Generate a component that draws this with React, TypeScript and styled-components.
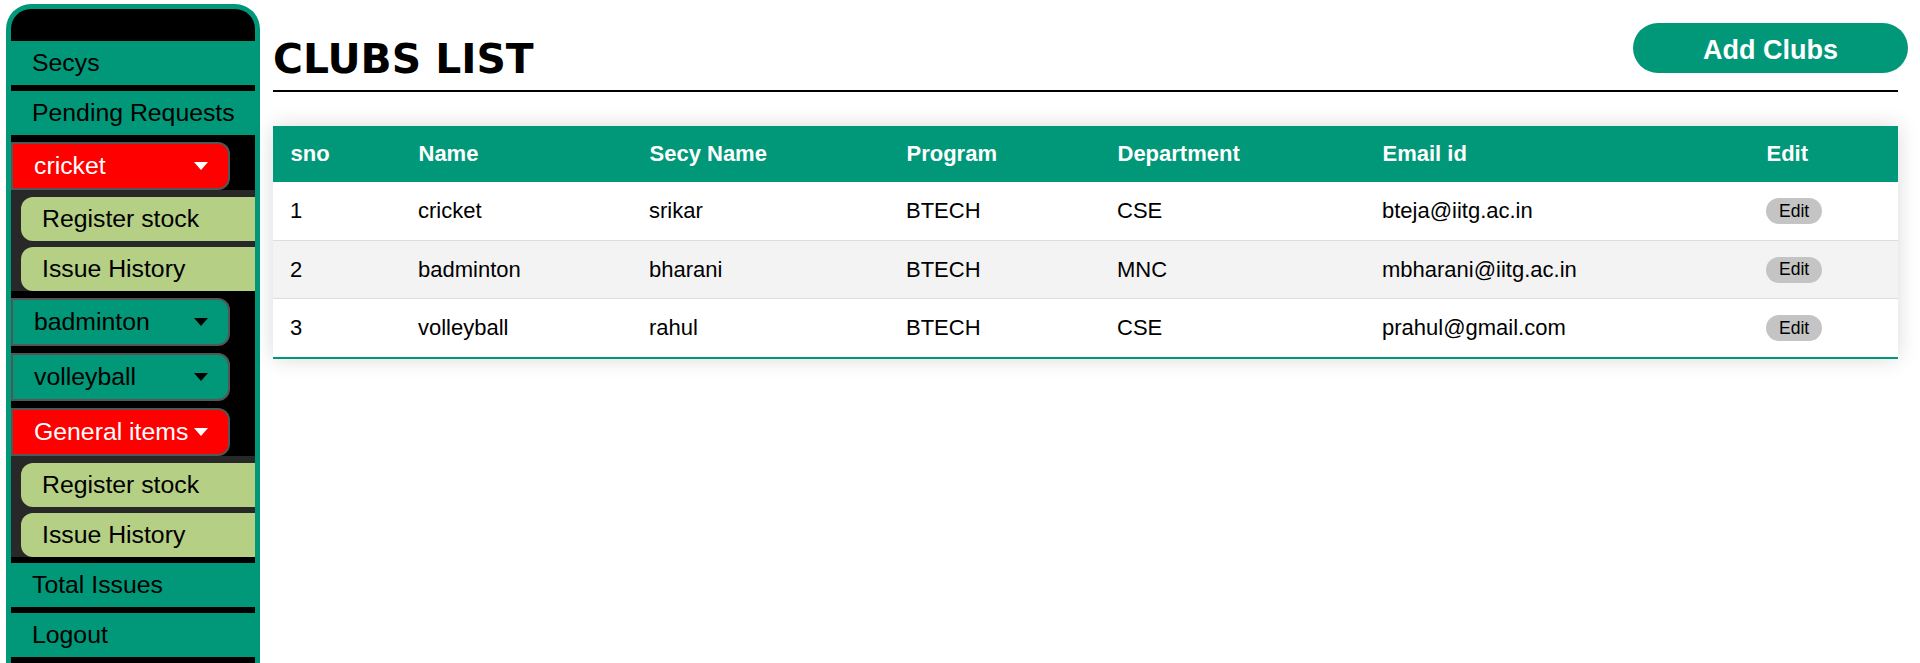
import React from "react";
import styled, { createGlobalStyle } from "styled-components";

const GREEN = "#009879";

const Global = createGlobalStyle`
  html, body { margin: 0; padding: 0; overflow: hidden; background: #fff; }
  body { font-family: "Liberation Sans", Arial, sans-serif; }
`;

const Page = styled.div`
  display: flex;
  align-items: flex-start;
  height: 663px;
  overflow: hidden;
`;

const Sidebar = styled.nav`
  flex: 0 0 auto;
  width: 244px;
  margin: 4px 0 0 6px;
  border: 5px solid ${GREEN};
  border-bottom: none;
  border-radius: 25px 25px 0 0;
  background: #000;
  display: flex;
  flex-direction: column;
  gap: 6px;
  padding-bottom: 60px;
  overflow: hidden;
`;

const SideTop = styled.div`
  height: 26px;
`;

const NavItem = styled.a`
  display: flex;
  align-items: center;
  height: 44px;
  padding-left: 21px;
  background: ${GREEN};
  color: #000;
  font-size: 24.8px;
  text-decoration: none;
`;

const Group = styled.div`
  margin-top: 1px;
  display: flex;
  flex-direction: column;
`;

const DropButton = styled.button<{ $active?: boolean }>`
  box-sizing: border-box;
  width: 219px;
  height: 48px;
  display: flex;
  align-items: center;
  justify-content: space-between;
  padding: 0 20px 0 21px;
  border: 2px solid #555;
  border-radius: 0 12px 12px 0;
  background: ${(p) => (p.$active ? "#ff0000" : GREEN)};
  color: ${(p) => (p.$active ? "#fff" : "#000")};
  font-family: "Liberation Sans", Arial, sans-serif;
  font-size: 24.8px;
  white-space: nowrap;
  cursor: pointer;
`;

const Caret = styled.span`
  flex: 0 0 auto;
  width: 0;
  height: 0;
  border-left: 7.5px solid transparent;
  border-right: 7.5px solid transparent;
  border-top: 8px solid currentColor;
`;

const SubMenu = styled.div`
  background: #282828;
  padding-top: 7px;
  display: flex;
  flex-direction: column;
  gap: 6px;
`;

const SubItem = styled.a`
  margin-left: 10px;
  height: 44px;
  display: flex;
  align-items: center;
  padding-left: 21px;
  background: #b5cf85;
  border-radius: 12px 0 0 12px;
  color: #000;
  font-size: 24.8px;
  text-decoration: none;
`;

const Main = styled.main`
  flex: 1;
  min-width: 0;
  margin: 0 22px 0 13px;
`;

const Header = styled.header`
  display: flex;
  justify-content: space-between;
  align-items: flex-start;
  height: 90px;
  border-bottom: 2px solid #000;
`;

const Title = styled.h1`
  margin: 38.5px 0 0 0;
  font-family: "DejaVu Sans", sans-serif;
  font-weight: 700;
  font-size: 40.8px;
  line-height: 40.8px;
  color: #000;
`;

const AddButton = styled.button`
  box-sizing: border-box;
  margin: 23px -10px 0 0;
  width: 275px;
  height: 50px;
  padding: 4px 0 0 0;
  border: none;
  border-radius: 25px;
  background: ${GREEN};
  color: #fff;
  font-family: "Liberation Sans", Arial, sans-serif;
  font-weight: 700;
  font-size: 27px;
  cursor: pointer;
`;

const Table = styled.table`
  margin-top: 34px;
  width: 100%;
  border-collapse: collapse;
  table-layout: fixed;
  box-shadow: 0 0 20px rgba(0, 0, 0, 0.15);
  font-family: "Liberation Sans", Arial, sans-serif;
  font-size: 22px;
`;

const HeadRow = styled.tr`
  background: ${GREEN};
  color: #fff;
  text-align: left;
`;

const Th = styled.th<{ $w: number }>`
  box-sizing: border-box;
  width: ${(p) => p.$w}px;
  padding: 16px 17px 16px 17.5px;
  line-height: 24px;
  font-weight: 700;
`;

const Row = styled.tr`
  border-bottom: 1px solid #dddddd;
  &:nth-of-type(even) {
    background: #f3f3f3;
  }
  &:last-of-type {
    border-bottom: 2px solid ${GREEN};
  }
`;

const Td = styled.td`
  padding: 16px 17px;
  line-height: 25.5px;
  color: #000;
  white-space: nowrap;
`;

const EditButton = styled.button`
  display: block;
  height: 26px;
  margin: 0 0 -0.5px 0;
  padding: 0 13px;
  border: none;
  border-radius: 13px;
  background: #c4c4c4;
  color: #000;
  font-family: "Liberation Sans", Arial, sans-serif;
  font-size: 17.5px;
  cursor: pointer;
`;

const columns = [
  { label: "sno", w: 128 },
  { label: "Name", w: 231 },
  { label: "Secy Name", w: 257 },
  { label: "Program", w: 211 },
  { label: "Department", w: 265 },
  { label: "Email id", w: 384 },
  { label: "Edit", w: 149 },
];

const clubs = [
  { sno: 1, name: "cricket", secy: "srikar", program: "BTECH", dept: "CSE", email: "bteja@iitg.ac.in" },
  { sno: 2, name: "badminton", secy: "bharani", program: "BTECH", dept: "MNC", email: "mbharani@iitg.ac.in" },
  { sno: 3, name: "volleyball", secy: "rahul", program: "BTECH", dept: "CSE", email: "prahul@gmail.com" },
];

const groups = [
  { name: "cricket", open: true },
  { name: "badminton", open: false },
  { name: "volleyball", open: false },
  { name: "General items", open: true },
];

export default function App() {
  return (
    <>
      <Global />
      <Page>
        <Sidebar>
          <SideTop />
          <NavItem>Secys</NavItem>
          <NavItem>Pending Requests</NavItem>
          {groups.map((g) => (
            <Group key={g.name}>
              <DropButton $active={g.open}>
                <span>{g.name}</span>
                <Caret />
              </DropButton>
              {g.open && (
                <SubMenu>
                  <SubItem>Register stock</SubItem>
                  <SubItem>Issue History</SubItem>
                </SubMenu>
              )}
            </Group>
          ))}
          <NavItem>Total Issues</NavItem>
          <NavItem>Logout</NavItem>
        </Sidebar>
        <Main>
          <Header>
            <Title>CLUBS LIST</Title>
            <AddButton>Add Clubs</AddButton>
          </Header>
          <Table>
            <thead>
              <HeadRow>
                {columns.map((c) => (
                  <Th key={c.label} $w={c.w}>
                    {c.label}
                  </Th>
                ))}
              </HeadRow>
            </thead>
            <tbody>
              {clubs.map((c) => (
                <Row key={c.sno}>
                  <Td>{c.sno}</Td>
                  <Td>{c.name}</Td>
                  <Td>{c.secy}</Td>
                  <Td>{c.program}</Td>
                  <Td>{c.dept}</Td>
                  <Td>{c.email}</Td>
                  <Td>
                    <EditButton>Edit</EditButton>
                  </Td>
                </Row>
              ))}
            </tbody>
          </Table>
        </Main>
      </Page>
    </>
  );
}
